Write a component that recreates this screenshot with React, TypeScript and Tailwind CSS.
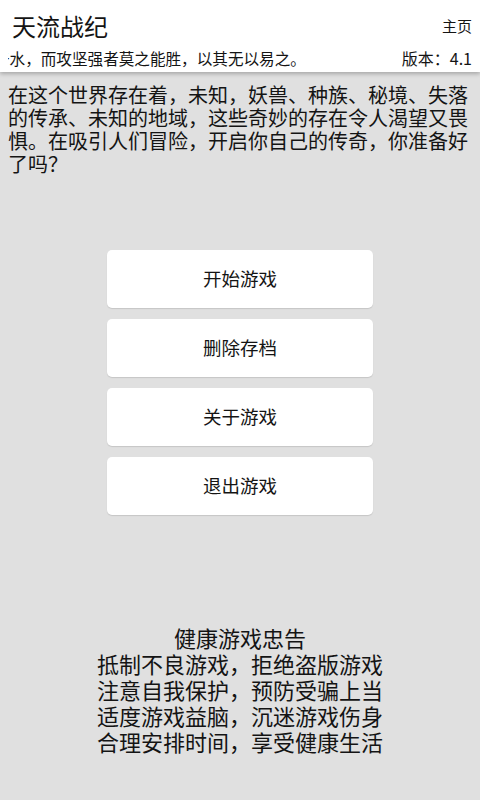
const cjk = { fontFamily: '"Noto Sans CJK SC", "Noto Sans", sans-serif' };

const menu = ["开始游戏", "删除存档", "关于游戏", "退出游戏"];

const advice = [
  "健康游戏忠告",
  "抵制不良游戏，拒绝盗版游戏",
  "注意自我保护，预防受骗上当",
  "适度游戏益脑，沉迷游戏伤身",
  "合理安排时间，享受健康生活",
];

export default function App() {
  return (
    <div className="flex h-[800px] w-[480px] flex-col overflow-hidden bg-[#e0e0e0] text-[#141414]" style={cjk}>
      {/* 顶栏 */}
      <header className="relative z-10 h-[72px] shrink-0 bg-white shadow-[0_2px_4px_rgba(0,0,0,0.25)]">
        <div className="flex h-[44px] items-start justify-between pl-3 pr-2 pt-[11px]">
          <h1 className="text-[24px] leading-[30px]">天流战纪</h1>
          <button className="mt-[6px] text-[15px] leading-[18px]">主页</button>
        </div>
        <div className="flex h-[28px] items-center justify-between pr-2">
          <div className="ml-2 flex-1 overflow-hidden whitespace-nowrap">
            <span className="-ml-[92px] block text-[15.6px] leading-[20px]">
              天下莫柔弱于水，而攻坚强者莫之能胜，以其无以易之。
            </span>
          </div>
          <span className="ml-4 text-[16px] leading-[20px]">版本：4.1</span>
        </div>
      </header>

      {/* 简介 */}
      <p className="px-2 pt-[11px] text-[20px] leading-[23px]">
        在这个世界存在着，未知，妖兽、种族、秘境、失落的传承、未知的地域，这些奇妙的存在令人渴望又畏惧。在吸引人们冒险，开启你自己的传奇，你准备好了吗？
      </p>

      {/* 菜单 */}
      <div className="mt-[75px] flex flex-col items-center gap-[11px]">
        {menu.map((m) => (
          <button
            key={m}
            className="h-[58px] w-[266px] rounded-[5px] bg-white text-[18.5px] shadow-[0_1px_1px_rgba(0,0,0,0.12)]"
          >
            {m}
          </button>
        ))}
      </div>

      {/* 忠告 */}
      <div className="mt-[109px] flex flex-col items-center text-[22px] leading-[26px]">
        {advice.map((a) => (
          <div key={a}>{a}</div>
        ))}
      </div>
    </div>
  );
}
